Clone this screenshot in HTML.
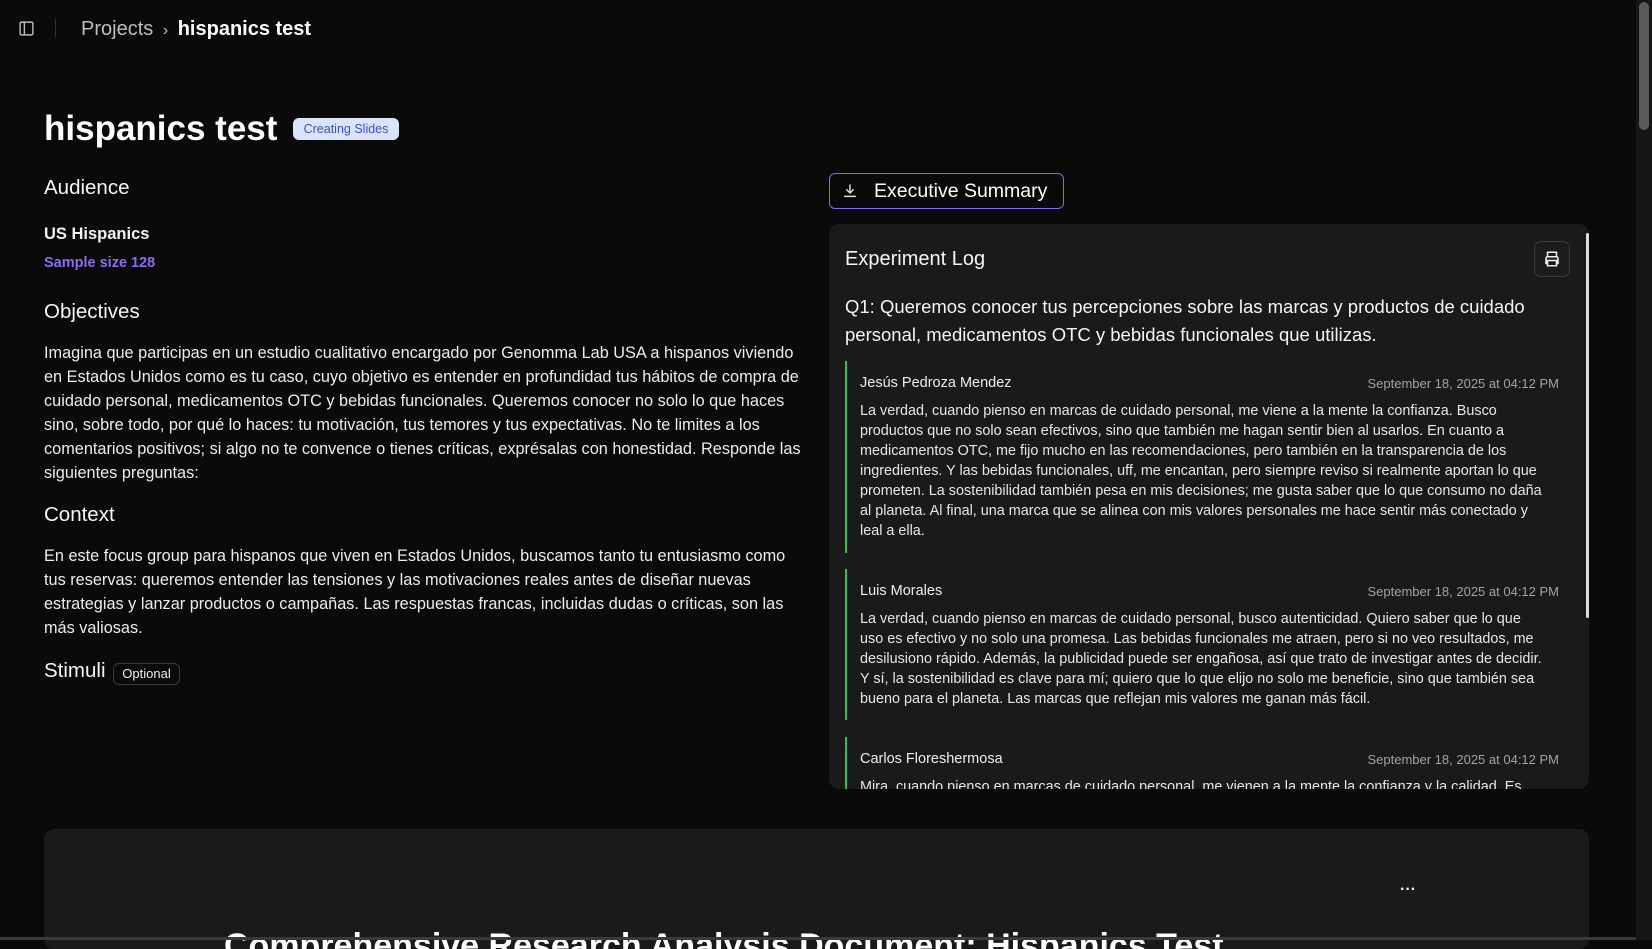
<!DOCTYPE html>
<html><head><meta charset="utf-8"><style>
*{box-sizing:border-box;margin:0;padding:0}
html,body{width:1652px;height:940px;overflow:hidden;background:#0a0a0a;color:#f2f2f2;font-family:"Liberation Sans",sans-serif}
.abs{position:absolute}
p{font-size:16.3px;line-height:24px;color:#ececec}
h2{font-size:20.5px;font-weight:400;color:#f5f5f5}
.entry{position:absolute;left:845px;width:714px;border-left:2px solid #22c55e;padding-left:13px}
.entry .hd{display:flex;justify-content:space-between;font-size:14.5px;color:#eee;height:20px;align-items:center}
.entry .hd span:last-child{color:#a3a3a3;font-size:13px}
.entry .bd{font-size:14.4px;line-height:20px;color:#e6e6e6;margin-top:8px;padding-right:14px}
</style></head><body>
<svg class="abs" style="left:18px;top:20px" width="17" height="17" viewBox="0 0 24 24" fill="none" stroke="#bbb" stroke-width="2"><rect x="3" y="3" width="18" height="18" rx="2"/><line x1="9" y1="3" x2="9" y2="21"/></svg>
<div class="abs" style="left:55px;top:19px;width:1px;height:18px;background:#333"></div>
<div class="abs" style="left:81px;top:18px;font-size:20px;color:#bdbdbd">Projects <span style="font-size:16px;margin:0 4px">›</span> <span style="color:#fff;font-weight:700">hispanics test</span></div>

<div class="abs" style="left:44px;top:109px;font-size:35px;font-weight:700;color:#fff">hispanics test</div>
<div class="abs" style="left:293px;top:118px;width:106px;height:22px;background:#dbe4ff;border-radius:6px;color:#3b4fd6;font-size:12.5px;line-height:22px;text-align:center">Creating Slides</div>

<h2 class="abs" style="left:44px;top:176px">Audience</h2>
<div class="abs" style="left:44px;top:225px;font-size:16.5px;font-weight:700">US Hispanics</div>
<div class="abs" style="left:44px;top:255px;font-size:14.5px;font-weight:700;color:#8b6cf0">Sample size 128</div>
<h2 class="abs" style="left:44px;top:300px">Objectives</h2>
<p class="abs" style="left:44px;top:341px;width:765px">Imagina que participas en un estudio cualitativo encargado por Genomma Lab USA a hispanos viviendo en Estados Unidos como es tu caso, cuyo objetivo es entender en profundidad tus hábitos de compra de cuidado personal, medicamentos OTC y bebidas funcionales. Queremos conocer no solo lo que haces sino, sobre todo, por qué lo haces: tu motivación, tus temores y tus expectativas. No te limites a los comentarios positivos; si algo no te convence o tienes críticas, exprésalas con honestidad. Responde las siguientes preguntas:</p>
<h2 class="abs" style="left:44px;top:503px">Context</h2>
<p class="abs" style="left:44px;top:544px;width:760px">En este focus group para hispanos que viven en Estados Unidos, buscamos tanto tu entusiasmo como tus reservas: queremos entender las tensiones y las motivaciones reales antes de diseñar nuevas estrategias y lanzar productos o campañas. Las respuestas francas, incluidas dudas o críticas, son las más valiosas.</p>
<h2 class="abs" style="left:44px;top:659px">Stimuli</h2>
<div class="abs" style="left:113px;top:663px;width:67px;height:22px;border:1px solid #3a3a3a;border-radius:6px;font-size:13px;line-height:20px;text-align:center;color:#eee">Optional</div>

<div class="abs" style="left:829px;top:173px;width:235px;height:36px;border:1px solid #7c6cf0;border-radius:6px;font-size:19.5px;line-height:34px;padding-left:44px;color:#fff">Executive Summary</div>
<svg class="abs" style="left:842px;top:183px" width="16" height="16" viewBox="0 0 24 24" fill="none" stroke="#ddd" stroke-width="2.2" stroke-linecap="round"><path d="M12 3v12M7 10l5 5 5-5M4 20h16"/></svg>

<div class="abs" style="left:829px;top:224px;width:760px;height:565px;background:#1a1a1a;border-radius:10px;overflow:hidden">
<div class="abs" style="right:0;top:9px;width:3px;height:385px;background:#ddd;border-radius:2px"></div>
</div>
<div class="abs" style="left:845px;top:248px;font-size:20px;color:#f5f5f5">Experiment Log</div>
<div class="abs" style="left:1534px;top:241px;width:36px;height:36px;border:1px solid #3d3d3d;border-radius:7px;background:#1c1c1c"></div>
<svg class="abs" style="left:1543px;top:250px" width="18" height="18" viewBox="0 0 24 24" fill="none" stroke="#eee" stroke-width="2"><path d="M6 9V3h12v6M6 18H4v-7a2 2 0 0 1 2-2h12a2 2 0 0 1 2 2v7h-2M6 14h12v7H6z"/></svg>
<div class="abs" style="left:845px;top:293px;width:720px;font-size:18.5px;line-height:28px;color:#f5f5f5">Q1: Queremos conocer tus percepciones sobre las marcas y productos de cuidado personal, medicamentos OTC y bebidas funcionales que utilizas.</div>

<div class="entry" style="top:361px;height:192px;padding-top:12px"><div class="hd"><span>Jesús Pedroza Mendez</span><span>September 18, 2025 at 04:12 PM</span></div>
<div class="bd">La verdad, cuando pienso en marcas de cuidado personal, me viene a la mente la confianza. Busco productos que no solo sean efectivos, sino que también me hagan sentir bien al usarlos. En cuanto a medicamentos OTC, me fijo mucho en las recomendaciones, pero también en la transparencia de los ingredientes. Y las bebidas funcionales, uff, me encantan, pero siempre reviso si realmente aportan lo que prometen. La sostenibilidad también pesa en mis decisiones; me gusta saber que lo que consumo no daña al planeta. Al final, una marca que se alinea con mis valores personales me hace sentir más conectado y leal a ella.</div></div>

<div class="entry" style="top:569px;height:151px;padding-top:12px"><div class="hd"><span>Luis Morales</span><span>September 18, 2025 at 04:12 PM</span></div>
<div class="bd">La verdad, cuando pienso en marcas de cuidado personal, busco autenticidad. Quiero saber que lo que uso es efectivo y no solo una promesa. Las bebidas funcionales me atraen, pero si no veo resultados, me desilusiono rápido. Además, la publicidad puede ser engañosa, así que trato de investigar antes de decidir. Y sí, la sostenibilidad es clave para mí; quiero que lo que elijo no solo me beneficie, sino que también sea bueno para el planeta. Las marcas que reflejan mis valores me ganan más fácil.</div></div>

<div class="entry" style="top:737px;height:52px;padding-top:12px;overflow:hidden"><div class="hd"><span>Carlos Floreshermosa</span><span>September 18, 2025 at 04:12 PM</span></div>
<div class="bd">Mira, cuando pienso en marcas de cuidado personal, me vienen a la mente la confianza y la calidad. Es</div></div>

<div class="abs" style="left:44px;top:829px;width:1545px;height:120px;background:#1a1a1a;border-radius:10px;overflow:hidden">
<div class="abs" style="left:1356px;top:52px;font-size:16px;font-weight:700;color:#eee">···</div>
<div class="abs" style="left:180px;top:98px;font-size:34px;font-weight:700;color:#fff;white-space:nowrap">Comprehensive Research Analysis Document: Hispanics Test</div>
</div>

<div class="abs" style="left:1636px;top:0;width:16px;height:940px;background:#161616"></div>
<div class="abs" style="left:1639px;top:2px;width:10px;height:128px;background:#5a5a5a;border-radius:5px"></div>
<div class="abs" style="left:0;top:937px;width:1636px;height:3px;background:#3a3a3a"></div>
</body></html>
